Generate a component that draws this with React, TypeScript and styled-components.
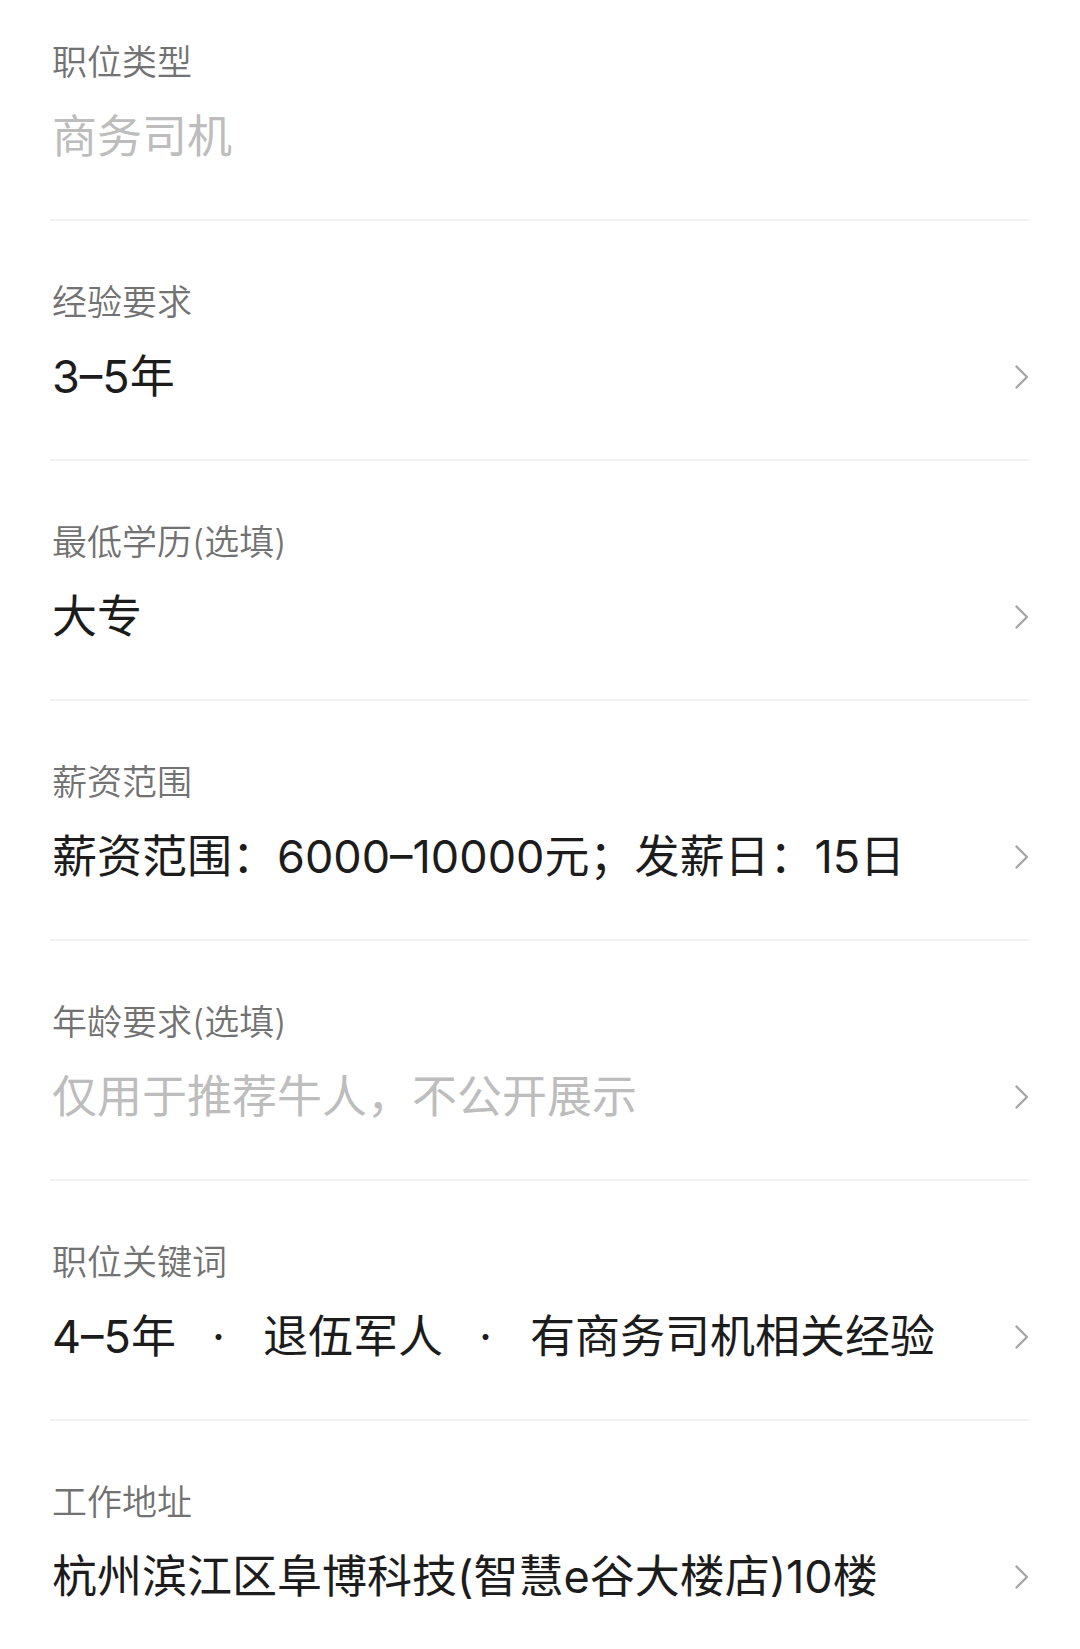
import React from 'react'
import styled, { createGlobalStyle } from 'styled-components'

const GlobalStyle = createGlobalStyle`
  html, body {
    margin: 0;
    padding: 0;
    background: #ffffff;
  }
  body {
    font-family: Inter, "Noto Sans CJK SC", sans-serif;
    -webkit-font-smoothing: antialiased;
  }
`

const Page = styled.div`
  width: 1080px;
  height: 1649px;
  overflow: hidden;
  background: #ffffff;
  padding: 0 51px 0 50px;
  box-sizing: border-box;
`

const Field = styled.div`
  display: flex;
  flex-direction: column;
  padding: 57px 0 52px 2px;
  border-bottom: 2px solid #f2f2f2;

  &:first-child {
    padding-top: 38px;
  }
`

const Label = styled.div`
  font-size: 35px;
  line-height: 48px;
  font-weight: 350;
  color: #727272;
`

const ValueRow = styled.div`
  display: flex;
  align-items: center;
  justify-content: space-between;
  margin-top: 21px;
  height: 60px;
`

interface ValueProps {
  placeholder?: boolean
}

const Value = styled.div<ValueProps>`
  font-size: 45px;
  line-height: 60px;
  font-weight: 370;
  color: ${({ placeholder }) => (placeholder ? '#bdbdbd' : '#1c1c1c')};
  white-space: nowrap;
`

const Dot = styled.span`
  margin: 0 38px 0 36px;
`

const Chevron = styled.svg`
  width: 14px;
  height: 24px;
  flex-shrink: 0;
`

const Arrow = () => (
  <Chevron viewBox="0 0 14 24">
    <polyline points="1.5,1.5 12,12 1.5,22.5" fill="none" stroke="#a6a6a6" strokeWidth="2.4" strokeLinecap="round" strokeLinejoin="round" />
  </Chevron>
)

interface FieldItem {
  label: string
  value: React.ReactNode
  placeholder?: boolean
  arrow?: boolean
}

const fields: FieldItem[] = [
  { label: '职位类型', value: '商务司机', placeholder: true, arrow: false },
  { label: '经验要求', value: '3–5年', arrow: true },
  { label: '最低学历(选填)', value: '大专', arrow: true },
  { label: '薪资范围', value: '薪资范围：6000–10000元；发薪日：15日', arrow: true },
  { label: '年龄要求(选填)', value: '仅用于推荐牛人，不公开展示', placeholder: true, arrow: true },
  {
    label: '职位关键词',
    value: (
      <>
        4–5年<Dot>·</Dot>退伍军人<Dot>·</Dot>有商务司机相关经验
      </>
    ),
    arrow: true,
  },
  { label: '工作地址', value: '杭州滨江区阜博科技(智慧e谷大楼店)10楼', arrow: true },
]

export default function App() {
  return (
    <>
      <GlobalStyle />
      <Page>
        {fields.map((f) => (
          <Field key={f.label}>
            <Label>{f.label}</Label>
            <ValueRow>
              <Value placeholder={f.placeholder}>{f.value}</Value>
              {f.arrow && <Arrow />}
            </ValueRow>
          </Field>
        ))}
      </Page>
    </>
  )
}
